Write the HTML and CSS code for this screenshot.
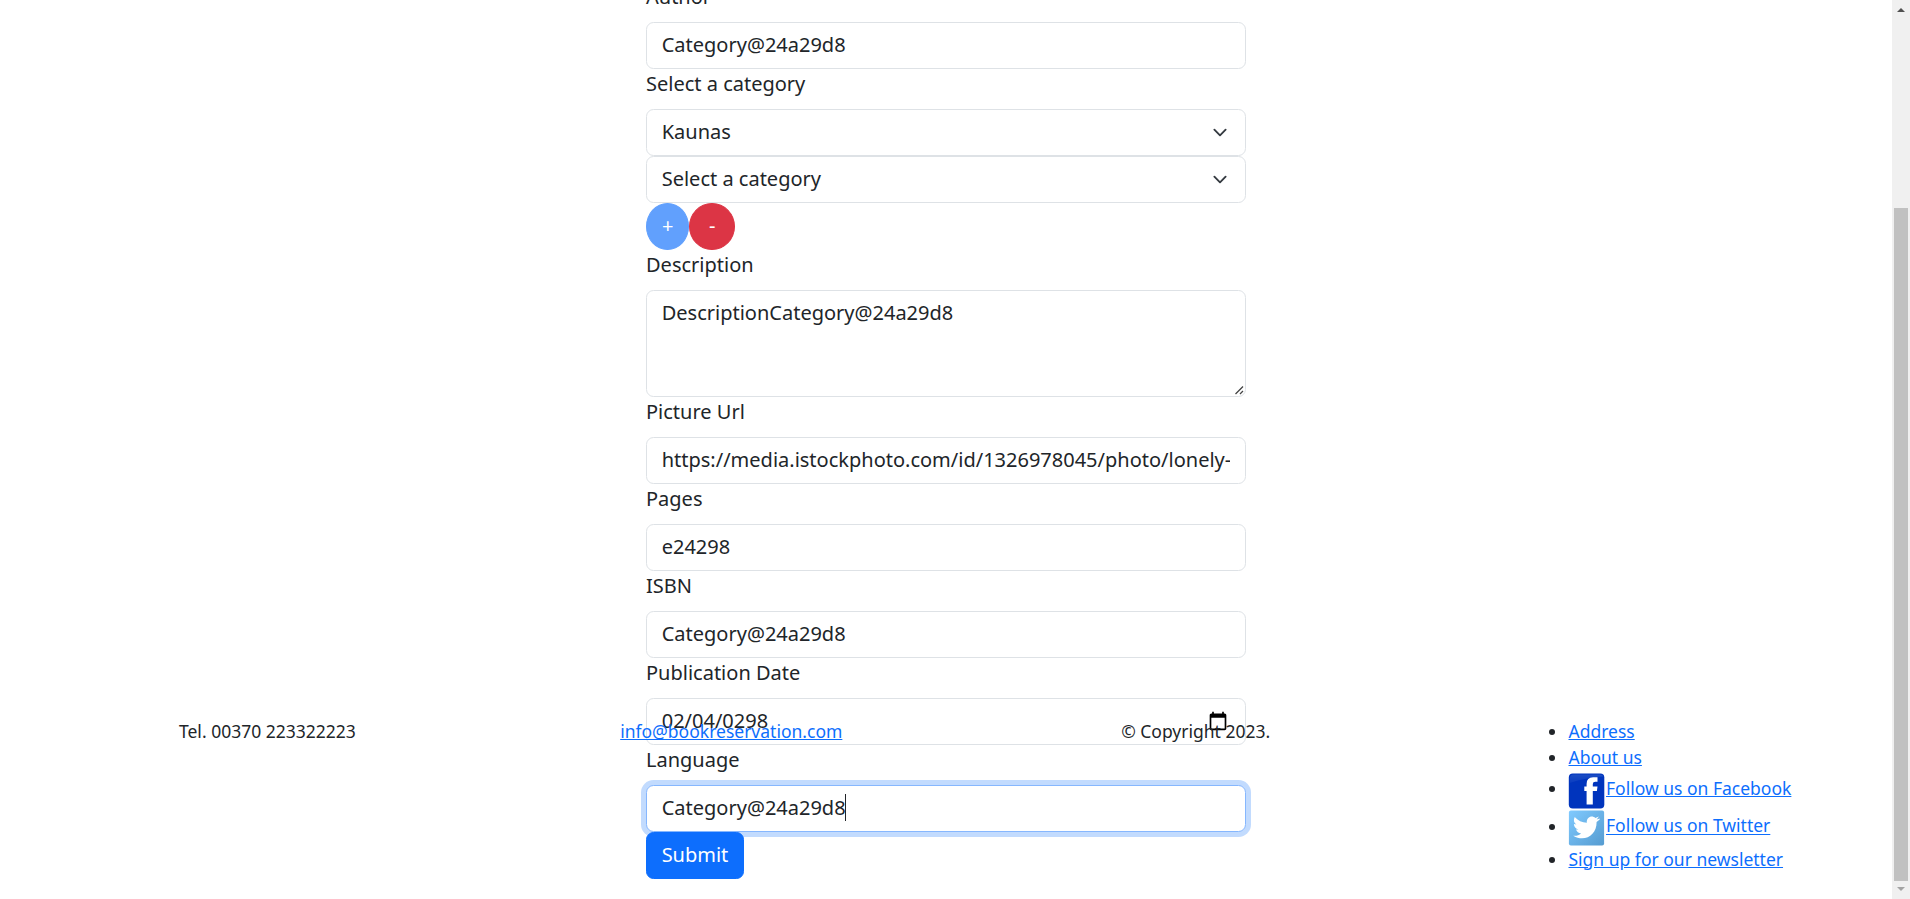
FILE: index.html
```html
<!DOCTYPE html>
<html lang="en">
<head>
<meta charset="utf-8">
<title>Book reservation</title>
<link rel="stylesheet" href="styles.css">
</head>
<body>
<div class="page">
  <main class="content">
    <form class="book-form">
      <label class="form-label">Author</label>
      <input class="form-control form-text" type="text" value="Category@24a29d8">
      <label class="form-label">Select a category</label>
      <div class="form-select">Kaunas<svg class="chevron" viewBox="0 0 16 16"><path d="m2 5 6 6 6-6"/></svg></div>
      <div class="form-select">Select a category<svg class="chevron" viewBox="0 0 16 16"><path d="m2 5 6 6 6-6"/></svg></div>
      <div class="category-actions">
        <button type="button" class="btn btn-add">+</button>
        <button type="button" class="btn btn-remove">-</button>
      </div>
      <label class="form-label">Description</label>
      <div class="textarea-wrap">
        <textarea class="form-control form-textarea" rows="3">DescriptionCategory@24a29d8</textarea>
        <svg class="resizer" viewBox="0 0 9 9"><path d="M.5 8 8 .5M5 8 8 5"/></svg>
      </div>
      <label class="form-label">Picture Url</label>
      <input class="form-control form-text" type="text" value="https://media.istockphoto.com/id/1326978045/photo/lonely-">
      <label class="form-label">Pages</label>
      <input class="form-control form-text" type="text" value="e24298">
      <label class="form-label">ISBN</label>
      <input class="form-control form-text" type="text" value="Category@24a29d8">
      <label class="form-label">Publication Date</label>
      <div class="form-control form-date">02/04/0298<svg class="calendar" viewBox="0 0 24 24"><path d="M20 3h-1V1h-2v2H7V1H5v2H4c-1.100 0-2 .9-2 2v16c0 1.100.9 2 2 2h16c1.100 0 2-.9 2-2V5c0-1.100-.9-2-2-2zm0 18H4V8h16v13z"/></svg></div>
      <label class="form-label">Language</label>
      <div class="form-control is-focused">Category@24a29d8<span class="caret"></span></div>
      <button type="button" class="btn btn-submit">Submit</button>
    </form>
  </main>
  <footer class="footer">
    <span>Tel. 00370 223322223</span>
    <a href="#">info@bookreservation.com</a>
    <span>© Copyright 2023.</span>
    <ul class="footer-links">
      <li><a href="#">Address</a></li>
      <li><a href="#">About us</a></li>
      <li class="social-first"><svg class="social" viewBox="-.3 0 37.5 37.5"><defs><linearGradient id="fb" x2="0" y2="1"><stop stop-color="#1b4dc4"/><stop offset="1" stop-color="#0a3cc0"/></linearGradient></defs><rect x=".5" y="1.500" width="35.500" height="35" rx="4" fill="#0034bd"/><path d="M1.500 11V6.500q0-4 4-4h26q3 0 3.500 2Q17 5.500 1.500 11z" fill="url(#fb)"/><path d="M18.300 32.500V19H16v-4.500h2.300V12Q18.300 5.300 24.800 5.300h4.400v4.500H27q-2.500 0-2.500 2.200v2.500h4.700l-.6 4.500h-4.100v13.500z" fill="#fff"/></svg><a href="#">Follow us on Facebook</a></li>
      <li><svg class="social" viewBox="-.3 0 37.5 37.5"><defs><linearGradient id="tw" x2="1" y2="1"><stop stop-color="#80caff"/><stop offset="1" stop-color="#559bd0"/></linearGradient></defs><rect x=".6" y="1.500" width="35.200" height="35" rx="2" fill="url(#tw)"/><path transform="translate(-.6 .9)" d="M32 8.700l-3 .8 2.200-2.800-3.500 1.400c-3.400-3.500-9.200-.8-8.600 4.700C14.500 12.700 10 10.500 7 7c-1.500 3-1 5.800 1.700 7.700L6.200 14c.1 2.800 1.800 4.900 4.600 5.600l-2.500.1c.8 2.200 2.500 3.600 5.100 3.800-2.100 1.700-4.600 2.600-7.900 2.300 11.600 6.800 23.600-.7 23.400-13.800L32 9.500z" fill="#fff"/></svg><a href="#">Follow us on Twitter</a></li>
      <li class="newsletter"><a href="#">Sign up for our newsletter</a></li>
    </ul>
  </footer>
</div>
<div class="scrollbar">
  <svg class="arrow" viewBox="0 0 8 4"><path d="M4 0 8 4H0z" fill="#505050"/></svg>
  <div class="thumb"></div>
  <svg class="arrow" viewBox="0 0 8 4"><path d="M0 0H8L4 4z" fill="#a3a3a3"/></svg>
</div>
</body>
</html>
```
FILE: styles.css
```css
* { box-sizing: border-box; }
body {
  margin: 0;
  height: 899px;
  display: flex;
  overflow: hidden;
  background: #fff;
  color: #212529;
  font: 400 20px/30px "Noto Sans", sans-serif;
}
.page {
  flex: 1;
  height: 899px;
  display: grid;
  grid-template-rows: 899px;
  grid-template-columns: 1892px;
}
.content, .footer { grid-area: 1 / 1; }
.content {
  display: flex;
  justify-content: center;
  align-items: flex-end;
  padding-bottom: 20px;
}
.book-form {
  width: 600px;
  display: flex;
  flex-direction: column;
}
.form-label { margin-bottom: 10px; }
.form-control, .form-select {
  display: block;
  width: 100%;
  height: 47px;
  margin: 0;
  padding: 7px 15px 8px 14.7px;
  border: 1px solid #dee2e6;
  border-radius: 7.5px;
  background: #fff;
  color: #212529;
  font: inherit;
  outline: 0;
}
.form-text { padding-top: 6px; padding-bottom: 9px; }
.form-select, .form-date {
  display: flex;
  align-items: center;
  justify-content: space-between;
}
.chevron {
  width: 20px;
  height: 15px;
  fill: none;
  stroke: #343a40;
  stroke-width: 2;
  stroke-linecap: round;
  stroke-linejoin: round;
}
.calendar { width: 20px; height: 20px; margin-right: 2px; }
.textarea-wrap { position: relative; height: 107px; }
.form-textarea { height: 107px; resize: none; }
.resizer {
  position: absolute;
  right: 2px;
  bottom: 2px;
  width: 9px;
  height: 9px;
  fill: none;
  stroke: #444;
  stroke-width: 1.3;
}
.is-focused {
  position: relative;
  border-color: #86b7fe;
  box-shadow: 0 0 0 5px rgba(13, 110, 253, .25);
}
.caret {
  display: inline-block;
  width: 1px;
  height: 27px;
  margin-left: -1px;
  vertical-align: -6px;
  background: #212529;
}
.category-actions { display: flex; }
.btn {
  height: 47px;
  padding: 7px 15px 8px;
  border: 1px solid transparent;
  color: #fff;
  font: inherit;
}
.btn-add { width: 43.4px; border-radius: 50%; background: #0d6efd; border-color: #0d6efd; opacity: .65; }
.btn-remove { width: 45.6px; border-radius: 50%; background: #dc3545; border-color: #dc3545; }
.btn-submit {
  position: relative;
  align-self: flex-start;
  width: 98px;
  padding-left: 14px;
  padding-right: 14px;
  border-radius: 7.5px;
  background: #0d6efd;
  border-color: #0d6efd;
}
.footer {
  position: relative;
  display: grid;
  grid-template-columns: 441.2px 501px 407.3px 1fr;
  align-items: start;
  padding: 718.4px 0 0 179px;
  font-size: 17.5px;
  line-height: 26px;
}
.footer a { color: #0d6efd; text-decoration: underline; }
.footer-links { margin: 0; padding-left: 40px; }
.social-first { margin-top: 1.2px; }
.newsletter { margin-top: -.8px; }
.social { width: 37.5px; height: 37.5px; vertical-align: middle; }
.scrollbar {
  width: 18px;
  height: 899px;
  display: flex;
  flex-direction: column;
  align-items: center;
  padding: 8px 0;
  background: #f0f0f0;
}
.arrow { width: 8px; height: 4px; flex: none; }
.thumb { width: 14px; height: 673px; margin: 196px 0 6px; background: #c1c1c1; flex: none; }
```
